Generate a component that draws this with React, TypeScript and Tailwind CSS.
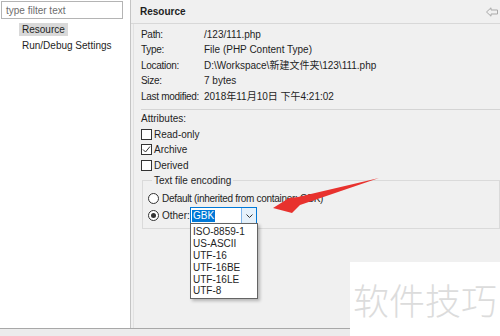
import React from 'react';

const font = { fontFamily: '"Liberation Sans", "Noto Sans CJK SC", sans-serif' };

const infoRows: [string, string][] = [
  ['Path:', '/123/111.php'],
  ['Type:', 'File  (PHP Content Type)'],
  ['Location:', 'D:\\Workspace\\新建文件夹\\123\\111.php'],
  ['Size:', '7  bytes'],
  ['Last modified:', '2018年11月10日 下午4:21:02'],
];

const encodings = ['ISO-8859-1', 'US-ASCII', 'UTF-16', 'UTF-16BE', 'UTF-16LE', 'UTF-8'];

function CheckRow({ label, checked }: { label: string; checked?: boolean }) {
  return (
    <div className="flex h-[15.5px] items-center">
      <span className="flex h-[11px] w-[11px] items-center justify-center border border-[#333333] bg-white">
        {checked && (
          <svg width="9" height="9" viewBox="0 0 9 9">
            <path d="M1 4.5 L3.5 7 L8 1.5" fill="none" stroke="#333" strokeWidth="1" />
          </svg>
        )}
      </span>
      <span className="ml-[2px]">{label}</span>
    </div>
  );
}

function Radio({ checked }: { checked?: boolean }) {
  return (
    <span className="flex h-[11px] w-[11px] items-center justify-center rounded-full border border-[#333333] bg-white">
      {checked && <span className="h-[5px] w-[5px] rounded-full bg-[#333333]" />}
    </span>
  );
}

export default function App() {
  return (
    <div className="relative flex h-[336px] w-[500px] flex-col overflow-hidden bg-[#f0f0f0] text-[10px] text-[#1e1e1e]" style={font}>
      <div className="flex h-[328px]">
        {/* left tree */}
        <div className="w-[131px] shrink-0 border-r border-[#c4c4c4] bg-white">
          <div className="ml-[1px] mt-[1px] flex h-[18px] w-[122px] items-center border border-[#b4b4b4] px-[4px] text-[#6d6d6d]">
            type filter text
          </div>
          <div className="mt-[3px] pl-[19px]">
            <div className="inline-flex h-[13px] items-center bg-[#d9d9d9] px-[3px]">Resource</div>
            <div className="mt-[2px] flex h-[13px] items-center px-[3px]">Run/Debug Settings</div>
          </div>
        </div>

        {/* properties page */}
        <div className="flex flex-1 flex-col">
          <div className="flex h-[24px] items-center justify-between border-b border-[#d8d8d8] pl-[9px] pr-[2px]">
            <span className="font-bold">Resource</span>
            <svg width="12" height="10" viewBox="0 0 12 10">
              <path d="M0.5 5 L5 0.8 V3 H11.5 V7 H5 V9.2 Z" fill="none" stroke="#a9a9a9" strokeWidth="1" />
            </svg>
          </div>
          <div className="ml-[2px] flex flex-1 flex-col border-l border-[#e2e2e2] pl-[7px] pt-[2.5px]">
            {infoRows.map(([k, v]) => (
              <div key={k} className="flex h-[15.5px] items-center">
                <span className="w-[63px] shrink-0 tracking-[-0.3px]">{k}</span>
                <span>{v}</span>
              </div>
            ))}
            <div className="mt-[5px] border-t border-[#d4d4d4]" />
            <div className="mt-[1px] flex h-[15.5px] items-center">Attributes:</div>
            <CheckRow label="Read-only" />
            <CheckRow label="Archive" checked />
            <CheckRow label="Derived" />
            <fieldset className="ml-[1px] border border-[#dadada] pb-[4px] pl-[5px]">
              <legend className="ml-[4px] px-[2px] leading-[15px]">Text file encoding</legend>
              <div className="mt-[2.5px] flex h-[16px] items-center gap-[3px]">
                <Radio />
                <span className="tracking-[-0.3px]">Default (inherited from container: GBK)</span>
              </div>
              <div className="mt-[1px] flex h-[16px] items-center">
                <Radio checked />
                <span className="ml-[3px] w-[28px]">Other:</span>
                <div className="relative flex h-[17px] w-[67px] border border-[#0078d7] bg-white">
                  <div className="flex flex-1 items-center pl-[1px]">
                    <span className="bg-[#0078d7] px-[1px] leading-[12px] text-white">GBK</span>
                  </div>
                  <div className="flex w-[15px] items-center justify-center border-l border-[#7eb4ea] bg-[#e5f1fb]">
                    <svg width="7" height="4" viewBox="0 0 7 4">
                      <path d="M0.5 0.5 L3.5 3.5 L6.5 0.5" fill="none" stroke="#333" strokeWidth="1" />
                    </svg>
                  </div>
                  <div className="absolute left-[-1px] top-[15px] z-10 w-[68px] border border-[#646464] bg-white pt-[2px] pb-[1px] shadow-[2px_2px_3px_rgba(0,0,0,0.25)]">
                    {encodings.map((e) => (
                      <div key={e} className="flex h-[11.8px] items-center pl-[2px]">{e}</div>
                    ))}
                  </div>
                </div>
              </div>
            </fieldset>
          </div>
        </div>
      </div>
      <div className="h-[8px] border-t border-[#a8a8a8] bg-[#ececec]" />

      {/* red annotation arrow */}
      <svg className="absolute left-0 top-0" width="500" height="336" viewBox="0 0 500 336">
        <polygon points="379,178 298,197 289,198 273,208 292,213 300,205" fill="#e8322e" />
      </svg>

      {/* watermark */}
      <div
        className="absolute bottom-0 right-0 flex h-[74px] w-[150px] items-center justify-center bg-white text-[36px] font-light text-[#dcdcdc]"
        style={{ fontFamily: '"Noto Sans CJK SC", sans-serif' }}
      >
        软件技巧
      </div>
    </div>
  );
}
